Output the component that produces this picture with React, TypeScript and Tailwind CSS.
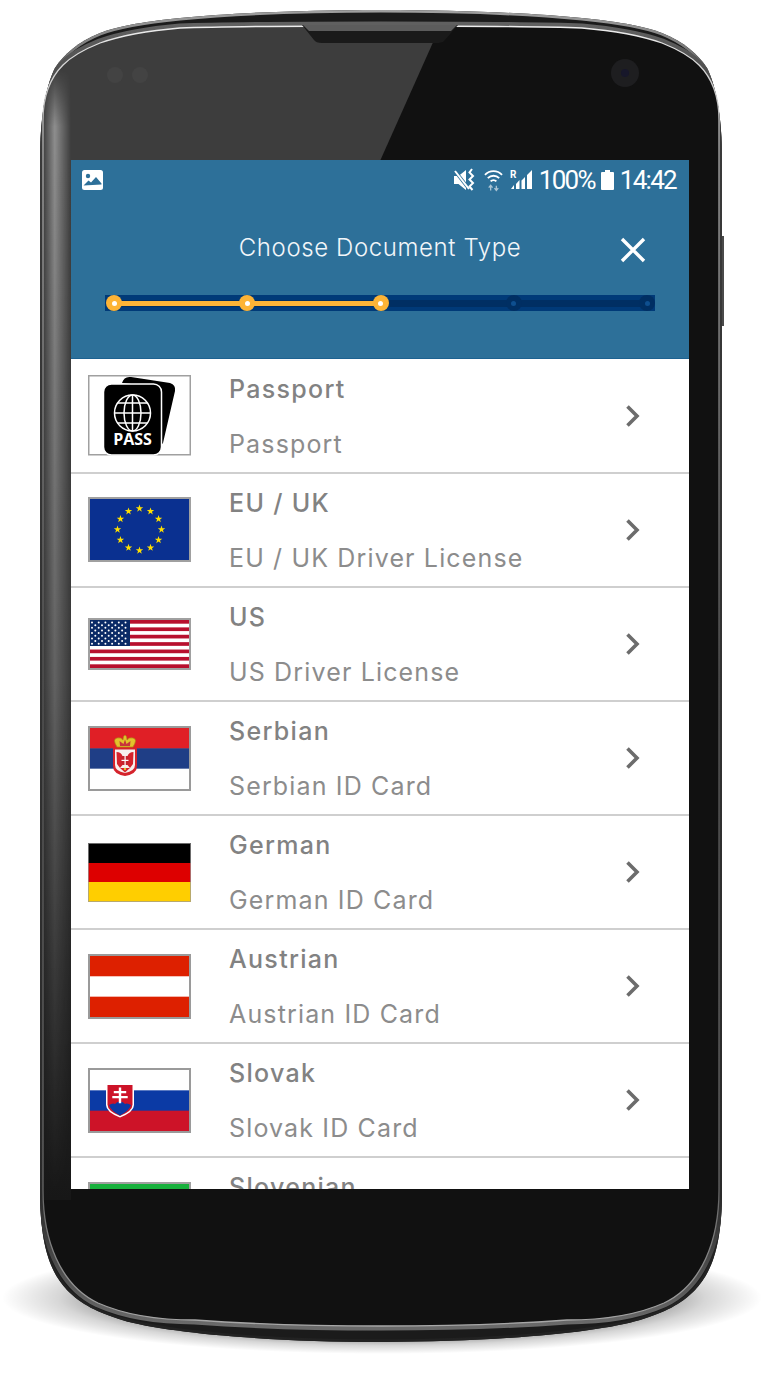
import { ReactNode } from 'react';

// phone body, drawn behind the screen
function PhoneBody() {
  const outer =
    'M381 10 C460 10 530 13 582 18 C622 22 647 27 662 33 C684 42 698 54 707 68 C714 82 722 110 722 160 L722 1190 C722 1245 712 1272 695 1290 C680 1305 665 1312 640 1320 C600 1332 500 1342 381 1342 C262 1342 162 1332 122 1320 C97 1312 82 1305 67 1290 C50 1272 40 1245 40 1190 L40 160 C40 110 48 82 55 68 C64 54 78 42 100 33 C115 27 140 22 180 18 C232 13 302 10 381 10 Z';
  const inner =
    'M381 26 C300 26 230 26 180 28 C145 31 120 36 100 43 C85 49 72 56 63 65 C52 76 43 92 43 120 L43 1190 C43 1240 60 1285 98 1303 C125 1315 160 1320 195 1320 C250 1324 320 1326 381 1326 C442 1326 512 1324 567 1320 C602 1320 637 1315 664 1303 C702 1285 719 1240 719 1190 L719 120 C719 92 710 76 699 65 C690 56 677 49 662 43 C642 36 617 31 582 28 C532 26 462 26 381 26 Z';
  return (
    <svg className="absolute inset-0" width="765" height="1394" viewBox="0 0 765 1394">
      <defs>
        <radialGradient id="floor" cx="0.5" cy="0.5" r="0.5">
          <stop offset="0.6" stopColor="#000" stopOpacity="0.6" />
          <stop offset="0.85" stopColor="#000" stopOpacity="0.16" />
          <stop offset="1" stopColor="#000" stopOpacity="0" />
        </radialGradient>
        <linearGradient id="shine" x1="0" y1="0" x2="0" y2="1">
          <stop offset="0" stopColor="#ededed" />
          <stop offset="0.1" stopColor="#a8a8a8" />
          <stop offset="0.5" stopColor="#555" />
          <stop offset="0.9" stopColor="#666" />
          <stop offset="1" stopColor="#a8a8a8" />
        </linearGradient>
        <linearGradient id="rimOuter" x1="0" y1="0" x2="0" y2="1">
          <stop offset="0" stopColor="#a0a0a0" />
          <stop offset="0.06" stopColor="#505050" />
          <stop offset="0.5" stopColor="#2e2e2e" />
          <stop offset="1" stopColor="#222" />
        </linearGradient>
        <linearGradient id="rimInner" x1="0" y1="0" x2="0" y2="1">
          <stop offset="0" stopColor="#606060" />
          <stop offset="0.08" stopColor="#3a3a3a" />
          <stop offset="0.9" stopColor="#2a2a2a" />
          <stop offset="1" stopColor="#6a6a6a" />
        </linearGradient>
        <linearGradient id="stripBase" gradientUnits="userSpaceOnUse" x1="0" y1="160" x2="0" y2="1200">
          <stop offset="0" stopColor="#3d3d3d" />
          <stop offset="0.5" stopColor="#383838" />
          <stop offset="1" stopColor="#171717" />
        </linearGradient>
        <linearGradient id="stripShine" gradientUnits="userSpaceOnUse" x1="43" y1="0" x2="71" y2="0">
          <stop offset="0" stopColor="#fff" stopOpacity="0" />
          <stop offset="0.42" stopColor="#fff" stopOpacity="0.42" />
          <stop offset="1" stopColor="#fff" stopOpacity="0" />
        </linearGradient>
        <linearGradient id="stripFade" gradientUnits="userSpaceOnUse" x1="0" y1="70" x2="0" y2="1200">
          <stop offset="0" stopColor="#fff" stopOpacity="0" />
          <stop offset="0.05" stopColor="#fff" stopOpacity="1" />
          <stop offset="0.5" stopColor="#fff" stopOpacity="0.55" />
          <stop offset="1" stopColor="#fff" stopOpacity="0" />
        </linearGradient>
        <mask id="stripMask" maskUnits="userSpaceOnUse" x="43" y="70" width="28" height="1130">
          <rect x="43" y="70" width="28" height="1130" fill="url(#stripFade)" />
        </mask>
        <clipPath id="glass"><path d={inner} /></clipPath>
        <clipPath id="shell"><path d={outer} /></clipPath>
      </defs>
      <ellipse cx="382" cy="1298" rx="380" ry="56" fill="url(#floor)" />
      <rect x="721" y="236" width="3" height="90" fill="#4a4a4a" />
      <path d={outer} fill="#1b1b1b" />
      <g clipPath="url(#shell)">
        <path d={outer} fill="none" stroke="url(#rimOuter)" strokeWidth="5" />
        <path d={inner} fill="none" stroke="url(#rimInner)" strokeWidth="9" />
      </g>
      <path d={inner} fill="#111111" />
      <g clipPath="url(#glass)">
        <path d="M40 20 L443 20 L376 170 L40 170 Z" fill="#3d3d3d" />
        <circle cx="115" cy="75" r="8" fill="#4a4a4a" opacity="0.5" />
        <circle cx="140" cy="75" r="8" fill="#4a4a4a" opacity="0.5" />
        <rect x="43" y="160" width="28" height="1040" fill="url(#stripBase)" />
        <rect x="43" y="70" width="28" height="1130" fill="url(#stripShine)" mask="url(#stripMask)" />
      </g>
      <path d={inner} fill="none" stroke="url(#shine)" strokeWidth="1.300" />
      <path d="M302 25 L458 25 L444 41 Q442 43 436 43 L322 43 Q316 43 314 40 Z" fill="#1a1a1a" />
      <path d="M303 25 L457 25 L451 31 L309 31 Z" fill="#5c5c5c" />
      <circle cx="625" cy="73" r="14" fill="#1e1e20" />
      <circle cx="625" cy="73" r="4" fill="#17172a" />
    </svg>
  );
}

function StatusIcons() {
  return (
    <div className="flex items-center gap-[7px]">
      <svg width="24" height="24" viewBox="0 0 24 24" fill="none">
        <path d="M1 8h4.500l7.500-6v20l-7.500-6H1z" fill="#fff" />
        <path d="M2 3l14 18" stroke="#2d7099" strokeWidth="3.500" />
        <path d="M2 3l14 18" stroke="#fff" strokeWidth="2" />
        <path d="M19 1l-2.500 3.500 3.500 3.500-3.500 3.500 3.500 3.500-3.500 3.500 3 3.500" stroke="#fff" strokeWidth="2" />
      </svg>
      <svg width="19" height="24" viewBox="0 0 20 24" fill="none" stroke="#fff" strokeWidth="1.900">
        <path d="M1 6.500a12.500 12.500 0 0 1 18 0" />
        <path d="M4 10a8.500 8.500 0 0 1 12 0" />
        <path d="M7 13.500a4 4 0 0 1 6 0" />
        <path d="M7 23v-5M5 20l2-2.500L9 20M13 18v5M11 20.500l2 2.500 2-2.500" stroke="#a9c3d3" strokeWidth="1.400" />
      </svg>
      <svg width="23" height="22" viewBox="0 0 23 22" fill="#fff">
        <path d="M1 20h3v-4zM6 20h3.500v-9L6 15zM11.500 20H15V8l-3.500 3.500zM17 20h5V1l-5 5z" />
        <text x="0" y="9" fontSize="10" fontWeight="700" fontFamily="Roboto, sans-serif" fill="#fff">R</text>
      </svg>
    </div>
  );
}

function Flag({ children, h, tone = '#a0a0a0' }: { children: ReactNode; h: number; tone?: string }) {
  return (
    <svg width="103" height={h} viewBox={`0 0 103 ${h}`}>
      {children}
      <rect x="1" y="1" width="101" height={h - 2} fill="none" stroke={tone} strokeWidth="2" />
    </svg>
  );
}

function PassportIcon() {
  return (
    <svg width="103" height="81" viewBox="0 0 103 81">
      <rect x="0.750" y="0.750" width="101.500" height="79" fill="#fff" stroke="#a0a0a0" strokeWidth="1.500" />
      <path d="M34 8 Q36 1 43 2 L82 8 Q88 10 87 16 L75 68 Q74 70 72 70 L72 12 L34 8 Z" fill="#000" />
      <rect x="15.500" y="9" width="58" height="71" rx="8" fill="#000" stroke="#fff" strokeWidth="1.500" />
      <g fill="none" stroke="#fff" strokeWidth="1.500">
        <circle cx="44.500" cy="38" r="18" />
        <ellipse cx="44.500" cy="38" rx="8.500" ry="18" />
        <path d="M44.500 20v36M26.500 38h36M29.500 28h30M29.500 48h30" />
      </g>
      <text x="44.500" y="70" textAnchor="middle" fontSize="16" fontWeight="700" fill="#fff" fontFamily="'Open Sans', sans-serif">PASS</text>
    </svg>
  );
}

// 5 point star as a polygon
function star(cx: number, cy: number, r: number) {
  const pts: string[] = [];
  for (let i = 0; i < 10; i++) {
    const a = -Math.PI / 2 + (i * Math.PI) / 5;
    const rr = i % 2 ? r * 0.4 : r;
    pts.push(`${(cx + rr * Math.cos(a)).toFixed(2)},${(cy + rr * Math.sin(a)).toFixed(2)}`);
  }
  return pts.join(' ');
}

function EuFlag() {
  return (
    <Flag h={65}>
      <rect width="103" height="65" fill="#0a3090" />
      {Array.from({ length: 12 }).map((_, i) => {
        const a = (i * Math.PI) / 6;
        return <polygon key={i} points={star(51.500 + 22 * Math.sin(a), 32.500 - 21 * Math.cos(a), 3.900)} fill="#fedf00" />;
      })}
    </Flag>
  );
}

function UsFlag() {
  const stripe = 48 / 13;
  return (
    <Flag h={52}>
      <rect width="103" height="52" fill="#fff" />
      {Array.from({ length: 7 }).map((_, i) => (
        <rect key={i} x="1" y={2 + i * 2 * stripe} width="101" height={stripe} fill="#b8102e" />
      ))}
      <rect x="2" y="2" width="40" height="26" fill="#0a2a66" />
      {Array.from({ length: 9 }).map((_, r) =>
        Array.from({ length: r % 2 ? 5 : 6 }).map((_, c) => (
          <circle key={`${r}-${c}`} cx={(r % 2 ? 7.300 : 4) + c * 6.700} cy={4.500 + r * 2.650} r="1" fill="#fff" />
        ))
      )}
    </Flag>
  );
}

function Bands({ h, colors }: { h: number; colors: string[] }) {
  const band = (h - 4) / colors.length;
  return (
    <>
      {colors.map((c, i) => (
        <rect key={i} x="2" y={2 + i * band} width="99" height={band + 0.500} fill={c} />
      ))}
    </>
  );
}

function SerbianFlag() {
  return (
    <Flag h={65} tone="#9a9a9a">
      <Bands h={65} colors={['#e01f26', '#1f3e86', '#ffffff']} />
      {/* crown */}
      <path d="M29 21 Q24 13 29 12 Q33 11 35 14 Q35 10 37 9 Q39 10 39 14 Q41 11 45 12 Q50 13 45 21 Z" fill="#e3c22c" stroke="#a98b12" strokeWidth="0.700" />
      <path d="M32 20 L31.500 15 L35.500 18 L37 13.500 L38.500 18 L42.500 15 L42 20 Z" fill="#c8343a" />
      {/* shield */}
      <path d="M25 22 L49 22 L49 40 Q49 48 37 50 Q25 48 25 40 Z" fill="#d5232c" />
      <path d="M27 23.500 L47 23.500 L47 39 Q47 45 37 47 Q27 45 27 39 Z" fill="#f6f1ee" />
      <path d="M28.500 26 Q33 26 34.500 30 L34.500 39 L32 42 L29 38 Z M45.500 26 Q41 26 39.500 30 L39.500 39 L42 42 L45 38 Z" fill="#d5232c" />
      <rect x="33.500" y="30" width="7" height="9" rx="1" fill="#c5242c" />
      <rect x="36.500" y="30" width="1.200" height="9" fill="#fff" />
      <rect x="33.500" y="33.800" width="7" height="1.200" fill="#fff" />
      <path d="M32 42h10l-5 4.500z" fill="#d5232c" />
      <circle cx="37" cy="43" r="1.200" fill="#e3c22c" />
    </Flag>
  );
}

function GermanFlag() {
  return (
    <svg width="103" height="59" viewBox="0 0 103 59">
      <rect width="103" height="20" fill="#000" />
      <rect y="20" width="103" height="19" fill="#dd0000" />
      <rect y="39" width="103" height="20" fill="#ffce00" />
      <rect x="0.500" y="0.500" width="102" height="58" fill="none" stroke="#9a9a9a" strokeOpacity="0.700" />
    </svg>
  );
}

function AustrianFlag() {
  return (
    <Flag h={65} tone="#9a9a9a">
      <Bands h={65} colors={['#dd2000', '#ffffff', '#dd2000']} />
    </Flag>
  );
}

function SlovakFlag() {
  return (
    <Flag h={65} tone="#9a9a9a">
      <Bands h={65} colors={['#ffffff', '#0b3aa5', '#cd1328']} />
      <path d="M18 17 L46 17 L46 37 Q46 44 32 49.500 Q18 44 18 37 Z" fill="#fff" />
      <path d="M19.500 17 L44.500 17 L44.500 36.500 Q44.500 43 32 48 Q19.500 43 19.500 36.500 Z" fill="#cd1328" />
      <path d="M21 37 Q25 34.500 27 36 Q30 33 32 34 Q34 33 37 36 Q39 34.500 43 37 Q41 43 32 47.500 Q23 43 21 37 Z" fill="#0b3aa5" />
      <path d="M30.800 19.500h2.400v3.500h5v2.200h-5v2.800h6.500v2.200h-6.500v5h-2.400v-5h-6.500v-2.200h6.500v-2.800h-5v-2.200h5z" fill="#fff" />
    </Flag>
  );
}

function SlovenianFlag() {
  return (
    <Flag h={65} tone="#a0a0a0">
      <Bands h={65} colors={['#17b13c', '#ffffff', '#e2231a']} />
    </Flag>
  );
}

// iconClass nudges each picture onto its row, they are not all centred the same
const docs: { title: string; sub?: string; icon: ReactNode; iconClass: string }[] = [
  { title: 'Passport', sub: 'Passport', icon: <PassportIcon />, iconClass: 'mb-[2px]' },
  { title: 'EU / UK', sub: 'EU / UK Driver License', icon: <EuFlag />, iconClass: 'mb-[2px]' },
  { title: 'US', sub: 'US Driver License', icon: <UsFlag />, iconClass: '' },
  { title: 'Serbian', sub: 'Serbian ID Card', icon: <SerbianFlag />, iconClass: 'pt-[1px]' },
  { title: 'German', sub: 'German ID Card', icon: <GermanFlag />, iconClass: 'pt-[1px]' },
  { title: 'Austrian', sub: 'Austrian ID Card', icon: <AustrianFlag />, iconClass: 'pt-[1px]' },
  { title: 'Slovak', sub: 'Slovak ID Card', icon: <SlovakFlag />, iconClass: 'pt-[1px]' },
  { title: 'Slovenian', icon: <SlovenianFlag />, iconClass: 'pt-[1px]' },
];

function DocRow({ title, sub, icon, iconClass }: { title: string; sub?: string; icon: ReactNode; iconClass: string }) {
  return (
    <div className="flex h-[114px] shrink-0 items-center border-b-2 border-[#cfcfcf] pl-[17px] pr-[48px]">
      <div className={`flex w-[103px] shrink-0 justify-center ${iconClass}`}>{icon}</div>
      <div className="ml-[38px] flex h-full flex-1 flex-col pt-[11px]">
        <span className="text-[25px] leading-[36px] font-medium tracking-[1.3px] text-[#828282]">{title}</span>
        {sub && <span className="mt-[19px] text-[25px] leading-[36px] font-normal tracking-[1.15px] text-[#8c8c8c]">{sub}</span>}
      </div>
      <svg width="16" height="24" viewBox="0 0 16 24" fill="none" stroke="#6c6c6c" strokeWidth="3.600">
        <path d="M2.500 2.500 L12 12 L2.500 21.500" />
      </svg>
    </div>
  );
}

function Stepper() {
  return (
    <div className="relative mt-[28px] ml-[34px] flex h-[16px] w-[550px] items-center bg-[#003a78]">
      <div className="absolute left-[9px] right-[9px] h-[7px] bg-[#002f63]" />
      <div className="absolute left-[9px] h-[5px] w-[266px] bg-[#fdb436]" />
      <div className="absolute inset-x-0 flex justify-between pl-[1px]">
        {[0, 1, 2, 3, 4].map((i) => (
          <div
            key={i}
            className={
              i < 3
                ? 'flex h-[16px] w-[16px] items-center justify-center rounded-full bg-[#fdb436]'
                : 'flex h-[16px] w-[16px] items-center justify-center rounded-full bg-[#002f63]'
            }
          >
            <div className={i < 3 ? 'h-[5px] w-[5px] rounded-full bg-white' : 'h-[5px] w-[5px] rounded-full bg-[#0e4f8f]'} />
          </div>
        ))}
      </div>
    </div>
  );
}

export default function App() {
  return (
    <div className="relative h-[1394px] w-[765px] overflow-hidden bg-white">
      <PhoneBody />
      <div className="relative ml-[71px] flex h-[1189px] w-[618px] flex-col pt-[160px]">
        <div className="flex h-full flex-col overflow-hidden bg-white">
          <header className="h-[199px] shrink-0 border-b border-[#1d6291] bg-[#2d7099]">
            <div className="flex h-[38px] items-center justify-between pr-[13px] pl-[11px] pt-[1px] font-['Roboto',sans-serif] text-white">
              <svg width="21" height="20" viewBox="0 0 21 20">
                <rect x="0" y="0" width="21" height="20" rx="2.500" fill="#fff" />
                <circle cx="6" cy="6" r="2.200" fill="#2d7099" />
                <path d="M1.500 15.500 L6.500 10.500 L9 12.500 L14 7 L19.500 13.500 L19.500 14.500 L1.500 15.500 Z" fill="#2d7099" />
              </svg>
              <div className="flex items-center gap-[6px]">
                <StatusIcons />
                <span className="text-[26px] leading-none tracking-[-1.75px]">100%</span>
                <svg width="13" height="20" viewBox="0 0 13 20" fill="#fff">
                  <path d="M4 0h5v2h3a1 1 0 0 1 1 1v16a1 1 0 0 1-1 1H1a1 1 0 0 1-1-1V3a1 1 0 0 1 1-1h3z" />
                </svg>
                <span className="text-[26px] leading-none tracking-[-1.7px]">14:42</span>
              </div>
            </div>
            <div className="relative mt-[33px] flex h-[36px] items-center justify-center">
              <span className="mb-[2px] font-['Inter',sans-serif] text-[24px] font-light tracking-[0.6px] text-[#f2f6f9]">Choose Document Type</span>
              <svg className="absolute right-[43px] top-[6px]" width="26" height="26" viewBox="0 0 26 26" stroke="#fff" strokeWidth="3.400" fill="none">
                <path d="M2 2 L24 24 M24 2 L2 24" />
              </svg>
            </div>
            <Stepper />
          </header>
          <div className="flex flex-col pt-[1px] font-['Inter',sans-serif]">
            {docs.map((d) => (
              <DocRow key={d.title} title={d.title} sub={d.sub} icon={d.icon} iconClass={d.iconClass} />
            ))}
          </div>
        </div>
      </div>
    </div>
  );
}
